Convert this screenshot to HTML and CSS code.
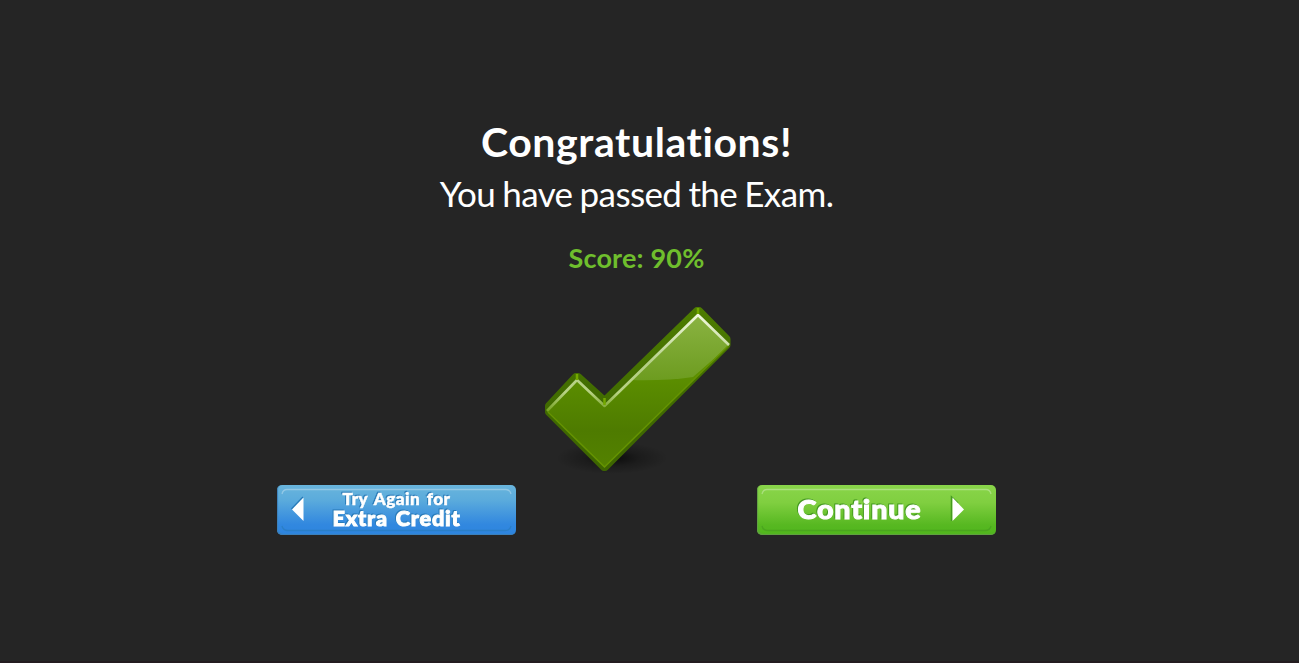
FILE: index.html
```html
<!DOCTYPE html>
<html lang="en">
<head>
<meta charset="utf-8">
<title>Exam result</title>
<link rel="stylesheet" href="styles.css">
</head>
<body>
<main class="result">
  <h1 class="title">Congratulations!</h1>
  <p class="message">You have passed the Exam.</p>
  <p class="score">Score: 90%</p>
  <svg class="check" viewBox="0 0 200 180" aria-hidden="true">
    <defs>
      <linearGradient id="edge" x1="0" y1="0" x2="0" y2="1">
        <stop offset="0" stop-color="#4d7c00"/><stop offset=".5" stop-color="#426d00"/><stop offset="1" stop-color="#3d6500"/>
      </linearGradient>
      <linearGradient id="face" gradientUnits="userSpaceOnUse" x1="0" y1="75" x2="0" y2="168">
        <stop offset="0" stop-color="#5c8f00"/><stop offset=".6" stop-color="#4e7b00"/><stop offset="1" stop-color="#548200"/>
      </linearGradient>
      <linearGradient id="gloss" gradientUnits="userSpaceOnUse" x1="0" y1="15" x2="0" y2="80">
        <stop offset="0" stop-color="#8ab342"/><stop offset="1" stop-color="#6d9c20"/>
      </linearGradient>
      <linearGradient id="shine" gradientUnits="userSpaceOnUse" x1="0" y1="14" x2="0" y2="112">
        <stop offset="0" stop-color="#f2f9df"/><stop offset=".5" stop-color="#b4cf86"/><stop offset=".8" stop-color="#b7d283"/><stop offset="1" stop-color="#73a01f"/>
      </linearGradient>
      <radialGradient id="shadow">
        <stop offset="0" stop-color="#000" stop-opacity=".7"/><stop offset=".5" stop-color="#000" stop-opacity=".25"/><stop offset="1" stop-color="#000" stop-opacity="0"/>
      </radialGradient>
      <filter id="soft"><feGaussianBlur stdDeviation=".7"/></filter>
      <clipPath id="faceClip"><path d="M8 111 37 81 64 107 158 15 189 45 64 167Z"/></clipPath>
    </defs>
    <ellipse cx="72" cy="158" rx="56" ry="16" fill="url(#shadow)"/>
    <path d="M9 106 36 77 38 77 64.500 101 157 11 159 11 186.500 39 186.500 45 65 167 64 167 9 112Z" fill="url(#edge)" stroke="url(#edge)" stroke-width="8" stroke-linejoin="round"/>
    <path d="M8 111 37 81 64 107 158 15 189 45 64 167Z" fill="url(#face)"/>
    <path d="M90 80Q125 81 153 77L190 45 158 13Z" fill="url(#gloss)" clip-path="url(#faceClip)"/>
    <path d="M8 112 64.500 167 188 46" fill="none" stroke="#659400" stroke-width="1.5" filter="url(#soft)"/>
    <path d="M7 111 37 80 64.500 106 158 15 189 45" fill="none" stroke="url(#shine)" stroke-width="2.6" stroke-linejoin="round" filter="url(#soft)"/>
    <path d="M37 74V80M64.500 98V105M158 8V14" stroke="#73a800" stroke-width="2.5"/>
  </svg>
  <div class="actions">
    <button class="button retry">
      <svg class="label" viewBox="0 0 239 50">
        <path class="bevel-light" d="M5 9Q6 4.500 10 4.500H229Q233 4.500 234 9"/>
        <path class="bevel-dark" d="M5 41Q6 45.500 11 45.500H228Q233 45.500 234 41"/>
        <path class="arrow-shade" d="M14.500 24 26 12"/>
        <path class="arrow" d="M15 24.500 26.500 12.500V36Z"/>
        <text class="caption" x="65.500" y="20" font-size="16" textLength="108" lengthAdjust="spacingAndGlyphs">Try Again for</text>
        <text class="caption large" x="55.500" y="41" font-size="21.500" textLength="128" lengthAdjust="spacingAndGlyphs">Extra Credit</text>
      </svg>
    </button>
    <button class="button continue">
      <svg class="label" viewBox="0 0 239 50">
        <path class="bevel-light" d="M5 9Q6 4.500 10 4.500H229Q233 4.500 234 9"/>
        <path class="bevel-dark" d="M5 41Q6 45.500 11 45.500H228Q233 45.500 234 41"/>
        <path class="arrow-shade" d="M194.500 36V12L201 18"/>
        <path class="arrow" d="M195.500 12.500 207 24.500 195.500 36Z"/>
        <text class="caption large" x="40.500" y="34" font-size="27" textLength="124" lengthAdjust="spacingAndGlyphs">Continue</text>
      </svg>
    </button>
  </div>
</main>
</body>
</html>
```

FILE: styles.css
```css
* { box-sizing: border-box; }
body {
  margin: 0;
  height: 663px;
  background: #252525;
  border-bottom: 2px solid #241c20;
  font-family: Lato, sans-serif;
  font-variant-ligatures: none;
  color: #fff;
}
.result {
  display: flex;
  flex-direction: column;
  align-items: center;
  width: 1273px;
  padding-top: 116px;
}
.title { margin: 0; font-size: 41px; line-height: 52px; font-weight: 700; letter-spacing: .6px; }
.message { margin: 0; font-size: 35px; line-height: 50px; letter-spacing: -.6px; word-spacing: -1.300px; }
.score {
  margin: 19px 0 0;
  font-size: 27px;
  line-height: 42px;
  font-weight: 700;
  letter-spacing: .2px;
  color: #6fbe2d;
}
.check { display: block; width: 200px; height: 180px; margin-top: 21px; margin-left: 7px; }
.actions {
  display: flex;
  justify-content: space-between;
  width: 719px;
  margin-top: 5px;
}
.button {
  width: 239px;
  height: 50px;
  padding: 0;
  border: 0;
  border-radius: 5px;
  font-family: inherit;
}
.retry { --shade: #287ab7; background: linear-gradient(#69b5dc, #5babdc 30%, #3288df 78%, #2c84df); box-shadow: inset 1px -1px 1px #3c80b9; }
.continue { --shade: #449a20; background: linear-gradient(#89d54a, #80cf40 35%, #57b821 80%, #50b61c); box-shadow: inset 1px -1px 1px #61a044; }
.label { display: block; width: 239px; height: 50px; }
.bevel-light { fill: none; stroke: #fff; stroke-opacity: .3; stroke-width: 1.3; }
.bevel-dark { fill: none; stroke: var(--shade); stroke-opacity: .6; stroke-width: 1.3; }
.arrow { fill: #fff; }
.arrow-shade { fill: none; stroke: var(--shade); stroke-width: 1.5; }
.caption {
  fill: #fff;
  stroke: #fff;
  stroke-width: .5px;
  font-family: Lato, sans-serif;
  font-weight: 900;
  letter-spacing: .5px;
  word-spacing: 2px;
  filter: drop-shadow(-1px -1px .5px var(--shade));
}
.large { stroke-width: 1px; letter-spacing: .8px; }
```
